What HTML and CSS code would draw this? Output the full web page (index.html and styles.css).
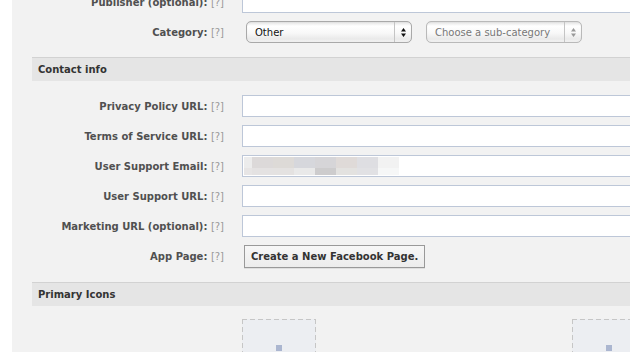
FILE: index.html
```html
<!DOCTYPE html>
<html>
<head>
    <meta charset="UTF-8">
    <title>App Settings</title>
    <link rel="stylesheet" href="styles.css">
</head>
<body>
    <div class="panel">
        <div class="fields top">
            <div class="row">
                <label class="label">Publisher (optional): <span class="help">[?]</span></label>
                <input class="text" type="text">
            </div>
            <div class="row">
                <label class="label">Category: <span class="help">[?]</span></label>
                <div class="select cat">
                    <span class="value">Other</span>
                    <span class="arrows"><svg width="5" height="9" viewBox="0 0 5 9"><path d="M2.5 0L5 3.5H0z M0 5.5H5L2.5 9z" fill="#111"/></svg></span>
                </div>
                <div class="select sub">
                    <span class="value">Choose a sub-category</span>
                    <span class="arrows"><svg width="5" height="9" viewBox="0 0 5 9"><path d="M2.5 0L5 3.5H0z M0 5.5H5L2.5 9z" fill="#999"/></svg></span>
                </div>
            </div>
        </div>

        <h3 class="section-head">Contact info</h3>
        <div class="fields">
            <div class="row">
                <label class="label">Privacy Policy URL: <span class="help">[?]</span></label>
                <input class="text" type="text">
            </div>
            <div class="row">
                <label class="label">Terms of Service URL: <span class="help">[?]</span></label>
                <input class="text" type="text">
            </div>
            <div class="row">
                <label class="label">User Support Email: <span class="help">[?]</span></label>
                <div class="text email"><span class="blurred"></span></div>
            </div>
            <div class="row">
                <label class="label">User Support URL: <span class="help">[?]</span></label>
                <input class="text" type="text">
            </div>
            <div class="row">
                <label class="label">Marketing URL (optional): <span class="help">[?]</span></label>
                <input class="text" type="text">
            </div>
            <div class="row btn-row">
                <label class="label">App Page: <span class="help">[?]</span></label>
                <button class="btn">Create a New Facebook Page.</button>
            </div>
        </div>

        <h3 class="section-head">Primary Icons</h3>
        <div class="icons">
            <div class="icon-slot"><span class="pin"></span></div>
            <div class="icon-slot"><span class="pin"></span></div>
        </div>
    </div>
</body>
</html>
```

FILE: styles.css
```css
body {
    margin: 0;
    background: #fff;
    font-family: 'DejaVu Sans', Verdana, sans-serif;
    font-size: 10px;
    overflow: hidden;
    height: 352px;
}
.panel {
    margin-left: 12px;
    padding-left: 20px;
    background: #f2f2f2;
    min-height: 352px;
}
.fields {
    display: flex;
    flex-direction: column;
    gap: 8px;
    padding: 14px 0;
}
.fields.top {
    margin-top: -23px;
}
.row {
    display: flex;
    align-items: center;
    height: 22px;
}
.btn-row {
    height: 23px;
}
.label {
    width: 192px;
    flex: none;
    margin-right: 18px;
    text-align: right;
    font-weight: bold;
    color: #505050;
    white-space: nowrap;
}
.help {
    font-weight: normal;
    color: #999;
}
.text {
    box-sizing: border-box;
    flex: none;
    width: 420px;
    height: 22px;
    margin: 0;
    border: 1px solid #bdc7d8;
    background: #fff;
    padding: 0;
}
.email {
    padding: 1px;
}
.blurred {
    display: block;
    width: 155px;
    height: 18px;
    background:
        linear-gradient(to right, #ececec 0 8px, #dcd9d9 8px 29px, #dddad7 29px 50px, #d6d7dc 50px 71px, #d6d5d8 71px 92px, #dfdad8 92px 113px, #dedee2 113px 134px, #f2f2f2 134px 155px) top / 155px 11px no-repeat,
        linear-gradient(to right, #e7e5e5 0 8px, #e4e2e2 8px 29px, #e4e2e1 29px 50px, #e9e9e9 50px 71px, #cdcccd 71px 92px, #e3e2e0 92px 113px, #e1e1e4 113px 134px, #f6f7f7 134px 155px) bottom / 155px 7px no-repeat;
}
.select {
    box-sizing: border-box;
    display: flex;
    align-items: center;
    height: 22px;
    border: 1px solid #a9a9a9;
    border-radius: 5px;
    background: linear-gradient(#e2e2e2, #fff 20%, #f8f8f8 55%, #e9e9e9 85%, #f4f4f4);
    box-shadow: inset 0 0 1px rgba(0,0,0,0.15);
}
.select .value {
    flex: 1;
    padding-left: 8px;
    color: #111;
}
.select .arrows {
    display: flex;
    align-items: center;
    justify-content: center;
    width: 16px;
    height: 100%;
    border-left: 1px solid #c4c4c4;
}
.cat {
    width: 166px;
    margin-left: 4px;
}
.sub {
    width: 156px;
    margin-left: 14px;
    border-color: #b9b9b9;
}
.sub .value {
    color: #777;
}
.section-head {
    margin: 0;
    height: 23px;
    line-height: 23px;
    border-top: 1px solid #d2d2d2;
    background: #e5e5e5;
    padding-left: 6px;
    font-size: 10px;
    font-weight: bold;
    color: #333;
}
.btn {
    flex: none;
    height: 23px;
    margin-left: 2px;
    padding: 0 6px;
    border: 1px solid #999;
    background: linear-gradient(#f7f7f7, #ececec);
    font-family: inherit;
    font-size: 10px;
    font-weight: bold;
    color: #333;
    box-shadow: 0 1px 0 rgba(0,0,0,0.08);
}
.icons {
    display: flex;
    gap: 256px;
    padding: 13px 0 0 210px;
}
.icon-slot {
    flex: none;
    width: 74px;
    height: 74px;
    position: relative;
    background:
        repeating-linear-gradient(to right, #c6c6c6 0 5px, transparent 5px 8px) top / 100% 1px no-repeat,
        repeating-linear-gradient(to right, #c6c6c6 0 5px, transparent 5px 8px) bottom / 100% 1px no-repeat,
        repeating-linear-gradient(to bottom, #c6c6c6 0 5px, transparent 5px 8px) left / 1px 100% no-repeat,
        repeating-linear-gradient(to bottom, #c6c6c6 0 5px, transparent 5px 8px) right / 1px 100% no-repeat,
        #eceef2;
}
.pin {
    position: absolute;
    left: 34px;
    top: 26px;
    width: 6px;
    height: 6px;
    background: #abb6d0;
}
```
